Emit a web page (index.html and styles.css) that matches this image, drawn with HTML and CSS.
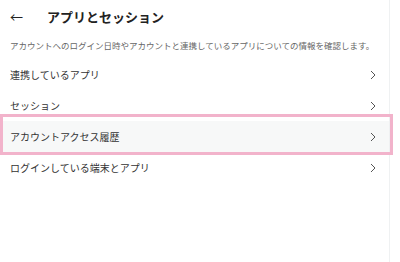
FILE: index.html
```html
<!DOCTYPE html>
<html lang="ja">
<head>
    <meta charset="UTF-8">
    <meta name="viewport" content="width=device-width, initial-scale=1.0">
    <title>アプリとセッション</title>
    <link rel="stylesheet" href="styles.css">
</head>
<body>
    <div class="page">
        <header class="header">
            <span class="back">←</span>
            <h1 class="title">アプリとセッション</h1>
        </header>

        <p class="desc">アカウントへのログイン日時やアカウントと連携しているアプリについての情報を確認します。</p>

        <ul class="menu">
            <li class="item">
                <span>連携しているアプリ</span>
                <svg class="chev" viewBox="0 0 6 10"><path d="M1 1l4 4-4 4"/></svg>
            </li>
            <li class="item">
                <span>セッション</span>
                <svg class="chev" viewBox="0 0 6 10"><path d="M1 1l4 4-4 4"/></svg>
            </li>
            <li class="item active">
                <span>アカウントアクセス履歴</span>
                <svg class="chev" viewBox="0 0 6 10"><path d="M1 1l4 4-4 4"/></svg>
            </li>
            <li class="item">
                <span>ログインしている端末とアプリ</span>
                <svg class="chev" viewBox="0 0 6 10"><path d="M1 1l4 4-4 4"/></svg>
            </li>
        </ul>
    </div>
</body>
</html>
```

FILE: styles.css
```css
body {
    margin: 0;
    font-family: "Noto Sans CJK JP", "Noto Sans", sans-serif;
    color: #222;
    background: #fff;
}
.page {
    width: 389px;
    min-height: 262px;
    border-right: 1px solid #eff1f2;
}
.header {
    display: flex;
    align-items: center;
    height: 32px;
}
.back {
    width: 47px;
    padding-left: 10px;
    box-sizing: border-box;
    font-size: 13px;
    line-height: 1;
}
.title {
    margin: 0;
    font-size: 13px;
    font-weight: 700;
    line-height: 1;
}
.desc {
    margin: 6px 0 0;
    padding-left: 10px;
    font-size: 8.5px;
    line-height: 14px;
    color: #666;
    white-space: nowrap;
}
.menu {
    list-style: none;
    margin: 7px 0 0;
    padding: 0;
}
.item {
    position: relative;
    display: flex;
    align-items: center;
    justify-content: space-between;
    height: 31px;
    padding: 0 13px 0 10px;
    font-size: 10px;
    color: #333;
}
.chev {
    width: 6px;
    height: 10px;
    fill: none;
    stroke: #555;
    stroke-width: 1;
}
.active {
    background: #f7f8f8;
}
.active::after {
    content: "";
    position: absolute;
    top: -7px;
    bottom: -3px;
    left: 0;
    right: -4px;
    border: 3px solid #f2b3cb;
}
```
